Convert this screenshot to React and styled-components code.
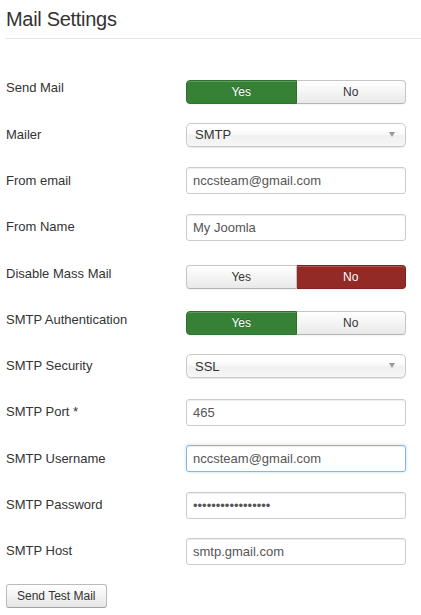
import React from "react";
import styled, { createGlobalStyle, css } from "styled-components";

const Global = createGlobalStyle`
  html, body { margin: 0; padding: 0; background: #fff; }
  body { font-family: "Liberation Sans", Arial, sans-serif; color: #333; }
`;

const Page = styled.div`
  padding-left: 6px;
  width: 415px;
`;

const Title = styled.h2`
  margin: 0;
  padding: 7px 0 7px;
  font-size: 20px;
  line-height: 24px;
  font-weight: normal;
  letter-spacing: -0.3px;
  color: #333;
  border-bottom: 1px solid #e5e5e5;
`;

const Form = styled.div`
  padding-top: 26.2px;
`;

const Row = styled.div`
  display: flex;
  align-items: center;
  height: 46.3px;
`;

const Label = styled.label`
  width: 180px;
  flex: none;
  font-size: 13px;
  line-height: 18px;
  color: #333;
`;

const Toggle = styled.div`
  display: flex;
  width: 220px;
  height: 24px;
  margin-top: 7px;
`;

const ToggleBtn = styled.div`
  flex: 1;
  display: flex;
  align-items: center;
  justify-content: center;
  font-size: 12px;
  box-sizing: border-box;
  border: 1px solid #c5c5c5;
  border-bottom-color: #b3b3b3;
  color: #333;
  background: linear-gradient(#ffffff, #e9e9e9);
  box-shadow: inset 0 1px 0 rgba(255,255,255,.2), 0 1px 2px rgba(0,0,0,.05);
  &:first-child { border-radius: 4px 0 0 4px; }
  &:last-child { border-radius: 0 4px 4px 0; border-left: none; }
  ${(p) => p.$on === "yes" && css`
    background: #378137;
    border-color: #2f6f2f;
    color: #fff;
    text-shadow: 0 -1px 0 rgba(0,0,0,.25);
  `}
  ${(p) => p.$on === "no" && css`
    background: #942a25;
    border-color: #7e231f;
    color: #fff;
    text-shadow: 0 -1px 0 rgba(0,0,0,.25);
  `}
`;

const Select = styled.div`
  position: relative;
  box-sizing: border-box;
  width: 220px;
  height: 24px;
  padding-left: 8px;
  display: flex;
  align-items: center;
  font-size: 13px;
  color: #333;
  border: 1px solid #c8c8c8;
  border-radius: 5px;
  background: linear-gradient(#ffffff 20%, #f7f7f7 50%, #f0f0f0 52%, #f5f5f5 100%);
  box-shadow: inset 0 0 3px #fff, 0 1px 1px rgba(0,0,0,.1);
`;

const Arrow = styled.svg`
  position: absolute;
  right: 10px;
  top: 8px;
`;

const Input = styled.input`
  box-sizing: border-box;
  width: 220px;
  height: 27px;
  padding: 0 6px;
  font-family: "Liberation Sans", Arial, sans-serif;
  font-size: 13px;
  color: #555;
  background: #fff;
  border: 1px solid ${(p) => (p.$focus ? "#86b6e2" : "#cccccc")};
  border-radius: 3px;
  box-shadow: inset 0 1px 1px rgba(0,0,0,.075)
    ${(p) => (p.$focus ? ", 0 0 3px rgba(82,168,236,.45)" : "")};
  outline: none;
`;

const Button = styled.button`
  margin-top: 9.5px;
  height: 24px;
  padding: 0 10px;
  font-family: "Liberation Sans", Arial, sans-serif;
  font-size: 12px;
  color: #333;
  border: 1px solid #bbb;
  border-bottom-color: #a2a2a2;
  border-radius: 3px;
  background: linear-gradient(#ffffff, #e6e6e6);
  box-shadow: inset 0 1px 0 rgba(255,255,255,.2), 0 1px 2px rgba(0,0,0,.05);
`;

const YesNo = ({ value }) => (
  <Toggle>
    <ToggleBtn $on={value === "yes" ? "yes" : null}>Yes</ToggleBtn>
    <ToggleBtn $on={value === "no" ? "no" : null}>No</ToggleBtn>
  </Toggle>
);

const Dropdown = ({ value }) => (
  <Select>
    {value}
    <Arrow width="6" height="5" viewBox="0 0 6 5">
      <polygon points="0,0 6,0 3,5" fill="#999" />
    </Arrow>
  </Select>
);

export default function App() {
  return (
    <>
      <Global />
      <Page>
        <Title>Mail Settings</Title>
        <Form>
          <Row><Label>Send Mail</Label><YesNo value="yes" /></Row>
          <Row><Label>Mailer</Label><Dropdown value="SMTP" /></Row>
          <Row><Label>From email</Label><Input readOnly value="nccsteam@gmail.com" /></Row>
          <Row><Label>From Name</Label><Input readOnly value="My Joomla" /></Row>
          <Row><Label>Disable Mass Mail</Label><YesNo value="no" /></Row>
          <Row><Label>SMTP Authentication</Label><YesNo value="yes" /></Row>
          <Row><Label>SMTP Security</Label><Dropdown value="SSL" /></Row>
          <Row><Label>SMTP Port *</Label><Input readOnly value="465" /></Row>
          <Row><Label>SMTP Username</Label><Input readOnly $focus value="nccsteam@gmail.com" /></Row>
          <Row><Label>SMTP Password</Label><Input readOnly type="password" value="aaaaaaaaaaaaaaaaa" /></Row>
          <Row><Label>SMTP Host</Label><Input readOnly value="smtp.gmail.com" /></Row>
          <Button>Send Test Mail</Button>
        </Form>
      </Page>
    </>
  );
}
